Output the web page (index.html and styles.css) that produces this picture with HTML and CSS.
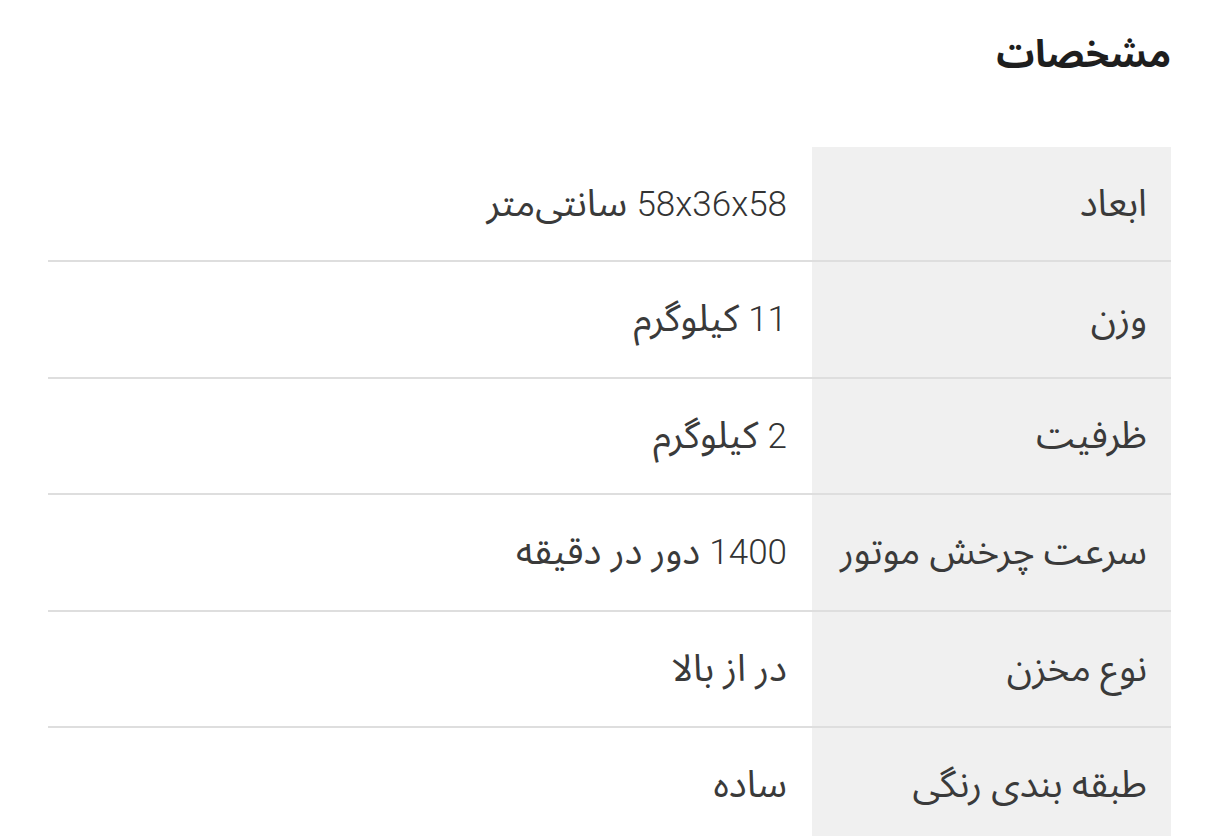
FILE: index.html
```html
<!DOCTYPE html>
<html lang="fa" dir="rtl">
<head>
<meta charset="utf-8">
<title>مشخصات</title>
<link rel="stylesheet" href="styles.css">
</head>
<body>
<div class="page">
  <h2 class="title">مشخصات</h2>
  <table class="specs">
    <tbody>
      <tr><th>ابعاد</th><td><span class="num">58x36x58</span> سانتی‌متر</td></tr>
      <tr><th>وزن</th><td><span class="num">11</span> کیلوگرم</td></tr>
      <tr><th>ظرفیت</th><td><span class="num">2</span> کیلوگرم</td></tr>
      <tr><th>سرعت چرخش موتور</th><td><span class="num">1400</span> دور در دقیقه</td></tr>
      <tr><th>نوع مخزن</th><td>در از بالا</td></tr>
      <tr><th>طبقه بندی رنگی</th><td>ساده</td></tr>
    </tbody>
  </table>
</div>
</body>
</html>
```

FILE: styles.css
```css
html, body {
  margin: 0;
  padding: 0;
  background: #ffffff;
}
body {
  font-family: Roboto, "Noto Sans Arabic", "DejaVu Sans", sans-serif;
  color: #3a3a3a;
}
.page {
  padding: 0 49px 0 48px;
}
.title {
  margin: 0;
  padding-top: 30px;
  height: 147px;
  box-sizing: border-box;
  font-size: 38px;
  font-weight: 700;
  color: #1e1e1e;
  line-height: 48px;
}
.specs {
  width: 100%;
  border-collapse: collapse;
  table-layout: fixed;
}
.specs tr {
  height: 116.5px;
  border-bottom: 2px solid #dedede;
}
.specs tr:first-child {
  height: 114px;
}
.specs th {
  box-sizing: border-box;
  width: 359px;
  background: #f0f0f0;
  font-weight: 400;
  text-align: right;
  padding: 0 24px 0 10px;
  font-size: 37.5px;
  color: #3a3a3a;
}
.specs td {
  text-align: right;
  padding: 0 25px 0 10px;
  font-size: 37.5px;
  color: #3a3a3a;
}
.num {
  font-size: 35px;
  font-weight: 300;
  color: #333333;
}
```
